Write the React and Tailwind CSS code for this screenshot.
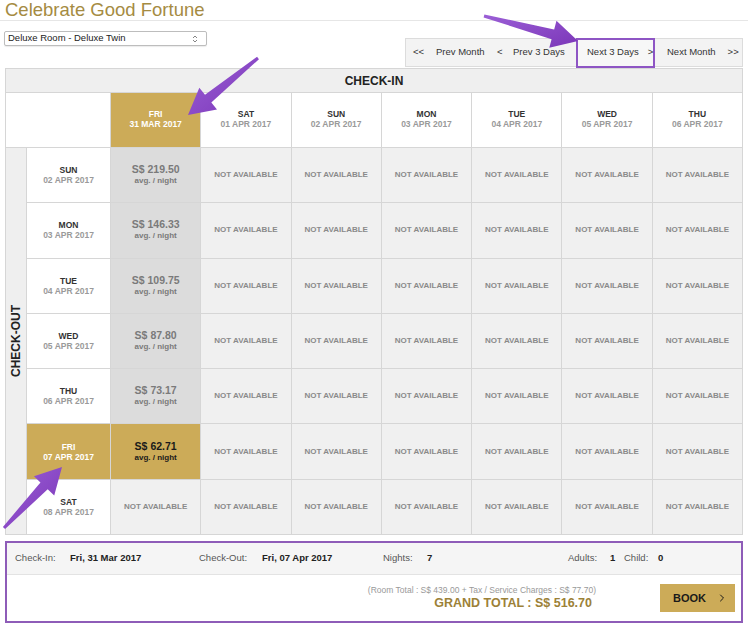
import { ChevronRight } from 'lucide-react';

const GOLD = 'bg-[#ccab58]';

const checkIns = [
  { d: 'FRI', t: '31 MAR 2017', sel: true },
  { d: 'SAT', t: '01 APR 2017' },
  { d: 'SUN', t: '02 APR 2017' },
  { d: 'MON', t: '03 APR 2017' },
  { d: 'TUE', t: '04 APR 2017' },
  { d: 'WED', t: '05 APR 2017' },
  { d: 'THU', t: '06 APR 2017' },
];

const checkOuts = [
  { d: 'SUN', t: '02 APR 2017', price: '219.50' },
  { d: 'MON', t: '03 APR 2017', price: '146.33' },
  { d: 'TUE', t: '04 APR 2017', price: '109.75' },
  { d: 'WED', t: '05 APR 2017', price: '87.80' },
  { d: 'THU', t: '06 APR 2017', price: '73.17' },
  { d: 'FRI', t: '07 APR 2017', price: '62.71', sel: true },
  { d: 'SAT', t: '08 APR 2017', price: null },
];

function arrow(x1, y1, x2, y2) {
  const dx = x2 - x1, dy = y2 - y1;
  const len = Math.hypot(dx, dy);
  const ux = dx / len, uy = dy / len;
  const nx = -uy, ny = ux;
  const headLen = 26, headW = 14, tailW = 1.5, neckW = 5;
  const bx = x2 - ux * headLen, by = y2 - uy * headLen;
  const pts = [
    [x1 + nx * tailW, y1 + ny * tailW],
    [bx + nx * neckW, by + ny * neckW],
    [bx + nx * headW, by + ny * headW],
    [x2, y2],
    [bx - nx * headW, by - ny * headW],
    [bx - nx * neckW, by - ny * neckW],
    [x1 - nx * tailW, y1 - ny * tailW],
  ];
  return pts.map(p => p.join(',')).join(' ');
}

function DateLabel({ d, t, sel }) {
  return (
    <div className="flex flex-col items-center leading-[10px] font-bold text-[8.5px]">
      <span className={sel ? 'text-white' : 'text-[#333]'}>{d}</span>
      <span className={sel ? 'text-white' : 'text-[#9a9a9a]'}>{t}</span>
    </div>
  );
}

function NotAvail() {
  return (
    <div className="bg-[#f0f0f0] flex items-center justify-center text-[8px] font-bold text-[#8a8a8a]">
      NOT AVAILABLE
    </div>
  );
}

export default function App() {
  return (
    <div className="relative w-[748px] h-[627px] bg-white overflow-hidden" style={{ fontFamily: '"Liberation Sans", Arial, sans-serif' }}>
      <div className="border-b border-[#e6e6e6] pl-[5px] h-[21px]">
        <h1 className="text-[18.5px] leading-[20px] text-[#a58b42]">Celebrate Good Fortune</h1>
      </div>

      <div className="flex items-start justify-between px-[4px] pr-[5px] mt-[10px]">
        <div className="w-[203px] h-[15px] border border-[#bdbdbd] rounded-[2px] flex items-center justify-between px-[3px] text-[9.5px] text-[#222] bg-white shadow-[0_1px_1px_rgba(0,0,0,0.08)]">
          <span>Deluxe Room - Deluxe Twin</span>
          <svg width="6" height="8" viewBox="0 0 6 8" className="mr-[5px]">
            <path d="M1 3 L3 1 L5 3 M1 5 L3 7 L5 5" fill="none" stroke="#777" strokeWidth="0.9" />
          </svg>
        </div>
        <div className="mt-[7px] w-[338px] h-[29px] border border-[#dcdcdc] bg-[#f3f3f3] flex items-center text-[9.5px] text-[#333] whitespace-nowrap">
          <span className="ml-[7px] w-[78px] flex"><span className="w-[23px]">&lt;&lt;</span>Prev Month</span>
          <span className="ml-[6px] w-[79px] flex"><span className="w-[16px]">&lt;</span>Prev 3 Days</span>
          <span className="-my-px h-[30px] w-[79px] shrink-0 border-2 border-[#8e55c4] bg-[#f7f7f7] flex items-center pl-[9px]">Next 3 Days<span className="ml-[9px]">&gt;</span></span>
          <span className="ml-[12px] flex">Next Month<span className="ml-[12px]">&gt;&gt;</span></span>
        </div>
      </div>

      <div className="mx-[5px] mt-[1px] border border-[#d6d6d6] bg-[#d6d6d6] grid gap-px grid-cols-[20px_83px_repeat(7,1fr)] grid-rows-[23px_54px_repeat(7,54.3px)]">
        <div className="col-span-9 bg-[#efefef] flex items-center justify-center text-[12px] font-bold text-[#222]">CHECK-IN</div>
        <div className="col-span-2 bg-white" />
        {checkIns.map(c => (
          <div key={c.t} className={`${c.sel ? GOLD : 'bg-white'} flex items-center justify-center pb-[3px]`}>
            <DateLabel {...c} />
          </div>
        ))}
        {checkOuts.map((r, i) => (
          <div key={r.t} className="contents">
            {i === 0 && (
              <div className="row-span-7 bg-[#efefef] flex items-center justify-center">
                <span className="-rotate-90 whitespace-nowrap text-[12px] font-bold text-[#222]">CHECK-OUT</span>
              </div>
            )}
            <div className={`${r.sel ? GOLD : 'bg-white'} flex items-center justify-center`}>
              <DateLabel {...r} />
            </div>
            {r.price ? (
              <div className={`${r.sel ? GOLD : 'bg-[#dcdcdc]'} flex flex-col items-center justify-center font-bold leading-[12px]`}>
                <span className={`text-[10.5px] ${r.sel ? 'text-[#1a1a1a]' : 'text-[#7a7a7a]'}`}>S$ {r.price}</span>
                <span className={`text-[8px] ${r.sel ? 'text-[#1a1a1a]' : 'text-[#7a7a7a]'}`}>avg. / night</span>
              </div>
            ) : (
              <NotAvail />
            )}
            {[0, 1, 2, 3, 4, 5].map(k => <NotAvail key={k} />)}
          </div>
        ))}
      </div>

      <div className="mx-[5px] mt-[6px] h-[82px] border-2 border-[#8e5cb8] flex flex-col">
        <div className="h-[32px] bg-[#f5f5f5] border-b border-[#e3e3e3] flex items-center text-[9.5px] text-[#555] pl-[8px]">
          <div className="w-[184px] flex"><span className="w-[55px]">Check-In:</span><span className="font-bold text-[#222]">Fri, 31 Mar 2017</span></div>
          <div className="w-[184px] flex"><span className="w-[63px]">Check-Out:</span><span className="font-bold text-[#222]">Fri, 07 Apr 2017</span></div>
          <div className="w-[185px] flex"><span className="w-[44px]">Nights:</span><span className="font-bold text-[#222]">7</span></div>
          <div className="flex"><span className="w-[42px]">Adults:</span><span className="w-[14px] font-bold text-[#222]">1</span><span className="w-[34px]">Child:</span><span className="font-bold text-[#222]">0</span></div>
        </div>
        <div className="flex-1 flex items-center justify-end pr-[6px]">
          <div className="flex flex-col items-end mr-[64px] -mt-[1px]">
            <span className="text-[8.5px] leading-[11px] text-[#999]">(Room Total : S$ 439.00 + Tax / Service Charges : S$ 77.70)</span>
            <span className="text-[12.5px] leading-[14px] font-bold text-[#9c8137] mr-[4px]">GRAND TOTAL : S$ 516.70</span>
          </div>
          <button className={`${GOLD} w-[75px] h-[28px] flex items-center justify-between pl-[13px] pr-[7px] text-[11px] font-bold text-[#1a1a1a]`}>
            BOOK
            <ChevronRight size={12} strokeWidth={2} />
          </button>
        </div>
      </div>

      <svg className="absolute inset-0 pointer-events-none" width="748" height="627">
        <defs>
          <linearGradient id="ag" x1="0" y1="0" x2="1" y2="1">
            <stop offset="0" stopColor="#9b5fd6" />
            <stop offset="1" stopColor="#7b36b8" />
          </linearGradient>
        </defs>
        <polygon points={arrow(484, 16, 578, 41)} fill="url(#ag)" />
        <polygon points={arrow(258, 58, 188, 115)} fill="url(#ag)" />
        <polygon points={arrow(4, 528, 62, 467)} fill="url(#ag)" />
      </svg>
    </div>
  );
}
